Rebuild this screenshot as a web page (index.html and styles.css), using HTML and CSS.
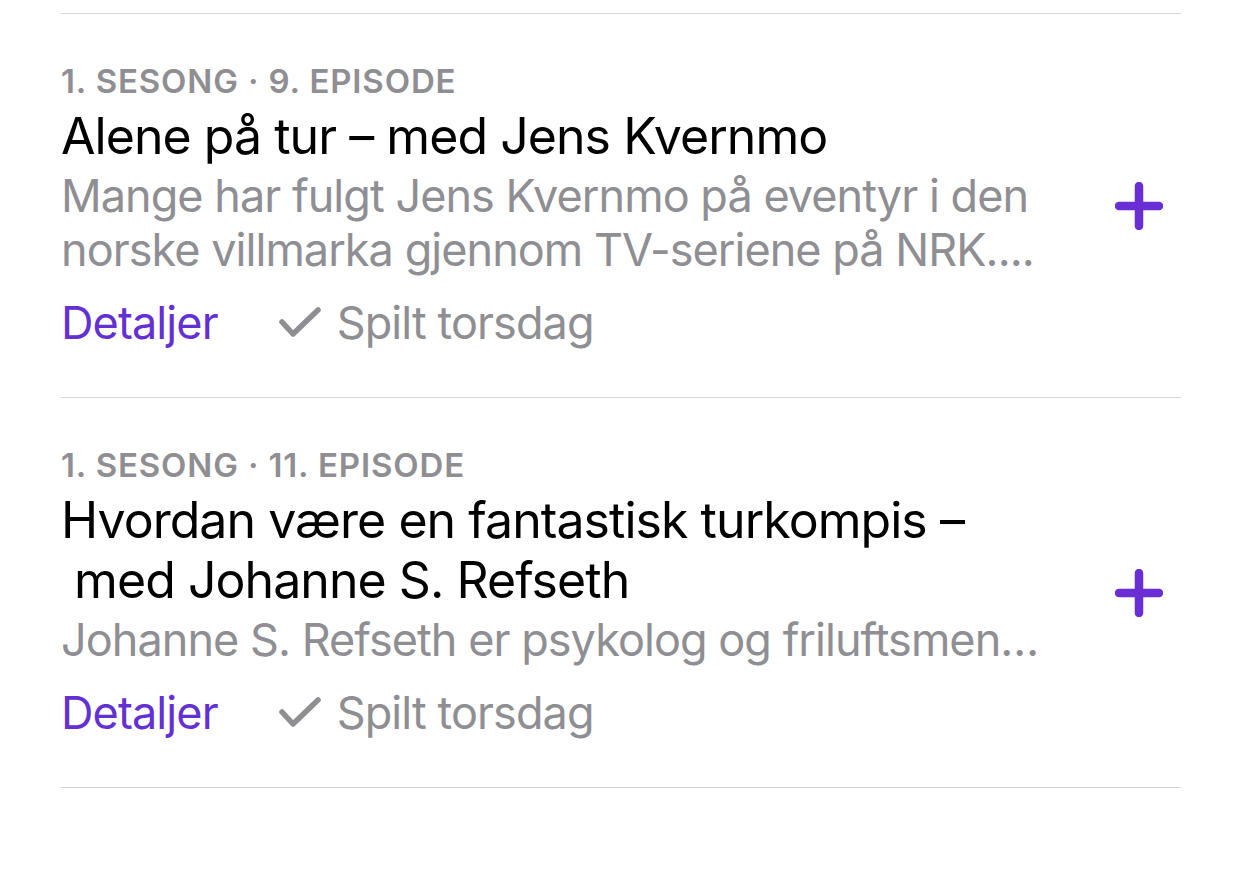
FILE: index.html
```html
<!DOCTYPE html>
<html lang="no">
<head>
<meta charset="utf-8">
<link rel="stylesheet" href="styles.css">
</head>
<body>
<div class="list">
  <div class="row">
    <div class="info">
      <div class="meta">1. SESONG · 9. EPISODE</div>
      <div class="title">Alene på tur – med Jens Kvernmo</div>
      <div class="desc"><span class="line">Mange har fulgt Jens Kvernmo på eventyr i den</span><span class="line">norske villmarka gjennom TV-seriene på NRK....</span></div>
      <div class="actions">
        <span class="details">Detaljer</span>
        <span class="played"><svg class="check" width="46" height="34" viewBox="0 0 46 34"><path d="M5 15 L16 27 L41 3" fill="none" stroke="#8e8e93" stroke-width="5.5" stroke-linecap="round" stroke-linejoin="round"/></svg>Spilt torsdag</span>
      </div>
    </div>
    <svg class="plus" width="48" height="48" viewBox="0 0 48 48"><path d="M24 4 V44 M4 24 H44" fill="none" stroke="#6a2fd4" stroke-width="8.5" stroke-linecap="round"/></svg>
  </div>
  <div class="row">
    <div class="info">
      <div class="meta">1. SESONG · 11. EPISODE</div>
      <div class="title">Hvordan være en fantastisk turkompis –<br>&nbsp;med Johanne S. Refseth</div>
      <div class="desc"><span class="line">Johanne S. Refseth er psykolog og friluftsmen…</span></div>
      <div class="actions">
        <span class="details">Detaljer</span>
        <span class="played"><svg class="check" width="46" height="34" viewBox="0 0 46 34"><path d="M5 15 L16 27 L41 3" fill="none" stroke="#8e8e93" stroke-width="5.5" stroke-linecap="round" stroke-linejoin="round"/></svg>Spilt torsdag</span>
      </div>
    </div>
    <svg class="plus" width="48" height="48" viewBox="0 0 48 48"><path d="M24 4 V44 M4 24 H44" fill="none" stroke="#6a2fd4" stroke-width="8.5" stroke-linecap="round"/></svg>
  </div>
</div>
</body>
</html>
```
FILE: styles.css
```css
html, body {
  margin: 0;
  background: #ffffff;
}
body {
  font-family: Inter, "Noto Sans", sans-serif;
  color: #000000;
}
.list {
  padding: 13px 61px 0 61px;
}
.row {
  display: flex;
  align-items: center;
  border-top: 1px solid #d6d6da;
  padding: 47px 0 47px 0;
}
.row:last-child {
  border-bottom: 1px solid #d6d6da;
}
.info {
  flex: 1;
  min-width: 0;
}
.meta {
  font-size: 33px;
  line-height: 40px;
  font-weight: 600;
  color: #8e8e93;
  letter-spacing: 0.85px;
}
.title {
  font-size: 50px;
  line-height: 60px;
  margin-top: 5px;
  letter-spacing: -0.95px;
}
.desc {
  font-size: 45px;
  line-height: 54px;
  color: #8e8e93;
  margin-top: 3px;
  letter-spacing: -0.95px;
}
.line {
  display: block;
  white-space: nowrap;
}
.actions {
  display: flex;
  align-items: center;
  font-size: 45px;
  line-height: 54px;
  margin-top: 19px;
  letter-spacing: -0.9px;
}
.details {
  color: #6330d3;
}
.played {
  display: flex;
  align-items: center;
  color: #8e8e93;
  margin-left: 59px;
}
.check {
  margin-right: 14px;
  margin-top: 2px;
}
.plus {
  flex: none;
  margin-right: 18px;
  margin-left: 40px;
}
```
